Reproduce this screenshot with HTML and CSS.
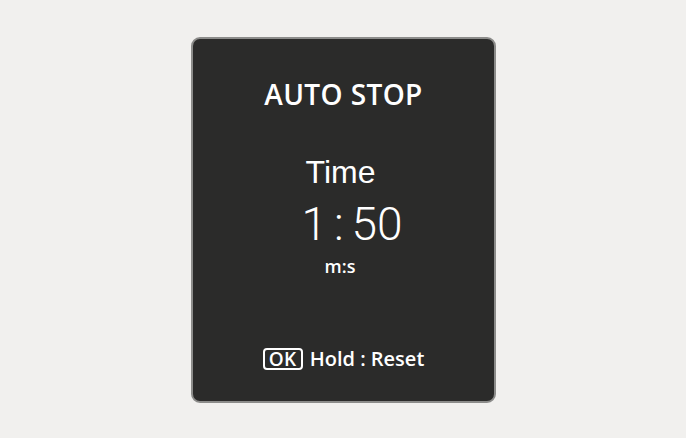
FILE: index.html
```html
<!DOCTYPE html>
<html>
<head>
<meta charset="utf-8">
<link rel="stylesheet" href="styles.css">
</head>
<body>
<div class="panel">
  <div class="title">AUTO STOP</div>
  <div class="label">Time</div>
  <div class="value">1<span class="colon">:</span>50</div>
  <div class="unit">m:s</div>
  <div class="footer"><span class="okbox">OK</span><span class="hold">Hold : Reset</span></div>
</div>
</body>
</html>
```
FILE: styles.css
```css
html, body {
  margin: 0;
  padding: 0;
  background: #f1f0ee;
  width: 686px;
  height: 438px;
  overflow: hidden;
}
.panel {
  box-sizing: border-box;
  width: 305px;
  height: 366px;
  margin: 37px 0 0 191px;
  background: #2b2b2a;
  border: 2px solid #8c8c8a;
  border-radius: 9px;
  display: flex;
  flex-direction: column;
  align-items: center;
  padding: 41px 0 31px;
  color: #ffffff;
  font-family: "Open Sans", "Liberation Sans", Arial, sans-serif;
}
.title {
  font-size: 28px;
  line-height: 28px;
  font-weight: 600;
  letter-spacing: 0.4px;
}
.label {
  margin-top: 48px;
  font-family: "Liberation Sans", Arial, sans-serif;
  font-size: 32px;
  line-height: 32px;
  margin-left: -6px;
}
.value {
  margin-top: 13px;
  font-family: Roboto, "Liberation Sans", sans-serif;
  font-weight: 300;
  font-size: 46px;
  line-height: 46px;
  margin-left: 17px;
}
.colon {
  margin: 0 8px 0 7px;
}
.unit {
  margin-top: 10px;
  font-size: 18px;
  line-height: 18px;
  font-weight: 600;
  margin-left: -7px;
}
.footer {
  margin-top: auto;
  display: flex;
  align-items: center;
  font-size: 20px;
  line-height: 22px;
  font-weight: 600;
}
.okbox {
  box-sizing: border-box;
  width: 40px;
  height: 22px;
  border: 2px solid #ffffff;
  border-radius: 4px;
  display: flex;
  align-items: center;
  justify-content: center;
  font-weight: 600;
  font-size: 19px;
  letter-spacing: 0.3px;
  margin-right: 7px;
}
```
